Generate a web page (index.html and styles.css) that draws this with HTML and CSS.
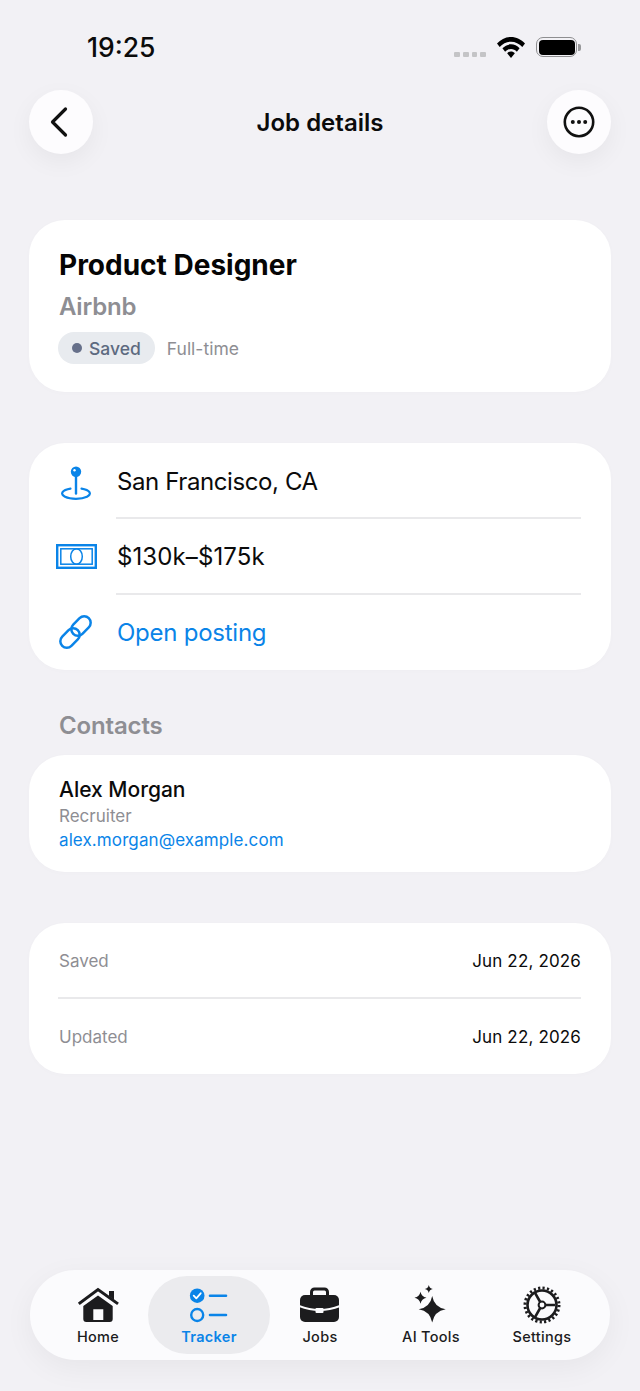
FILE: index.html
```html
<!DOCTYPE html>
<html lang="en">
<head>
<meta charset="utf-8">
<title>Job details</title>
<link rel="stylesheet" href="styles.css">
</head>
<body>
<div class="page">
  <div class="status">
    <span class="time">19:25</span>
    <div class="status-right">
      <div class="signal"><i></i><i></i><i></i><i></i></div>
      <svg class="wifi" width="28" height="21" viewBox="1.600 3 24.800 16" preserveAspectRatio="none"><path d="M14 3C9.200 3 5 4.900 1.600 8l2.400 2.600C6.700 8.100 10.200 6.600 14 6.600s7.300 1.500 10 4L26.400 8C23 4.900 18.800 3 14 3z" fill="#000"/><path d="M14 8.600c-2.900 0-5.500 1.100-7.600 3l2.400 2.600c1.400-1.300 3.200-2.100 5.200-2.100s3.800.8 5.200 2.100l2.400-2.600c-2.100-1.900-4.700-3-7.600-3z" fill="#000"/><path d="M14 14c-1.300 0-2.500.5-3.400 1.300L14 19l3.400-3.700C16.500 14.500 15.300 14 14 14z" fill="#000"/></svg>
      <div class="battery"><div class="battery-fill"></div></div>
      <div class="battery-cap"></div>
    </div>
  </div>

  <header class="nav">
    <button class="round">
      <svg width="22" height="32" viewBox="0 0 22 32"><path d="M15.500 3 2.500 16l13 13" fill="none" stroke="#111" stroke-width="3.200" stroke-linecap="round" stroke-linejoin="round"/></svg>
    </button>
    <h1 class="nav-title">Job details</h1>
    <button class="round">
      <svg width="32" height="32" viewBox="0 0 32 32"><circle cx="16" cy="16" r="14.200" fill="none" stroke="#111" stroke-width="2.600"/><circle cx="9.800" cy="16" r="2" fill="#111"/><circle cx="16" cy="16" r="2" fill="#111"/><circle cx="22.200" cy="16" r="2" fill="#111"/></svg>
    </button>
  </header>

  <main class="content">
    <section class="card summary">
      <h2 class="job-title">Product Designer</h2>
      <p class="company">Airbnb</p>
      <div class="tags">
        <span class="pill"><i class="dot"></i>Saved</span>
        <span class="job-type">Full-time</span>
      </div>
    </section>

    <section class="card info">
      <div class="info-row">
        <div class="info-icon">
          <svg width="32" height="38" viewBox="0 0 32 38"><path d="M10.500 26.630A13.900 5.300 0 1 0 21.500 26.630" fill="none" stroke="#0a84e8" stroke-width="2.200" stroke-linecap="round"/><path d="M16 12v19.500" stroke="#0a84e8" stroke-width="2.400" stroke-linecap="round"/><circle cx="16" cy="9.700" r="5.200" fill="#0a84e8"/><circle cx="14.500" cy="8.300" r="1.200" fill="#fff"/></svg>
        </div>
        <span class="info-text text-place">San Francisco, CA</span>
      </div>
      <div class="info-row">
        <div class="info-icon">
          <svg width="41" height="25" viewBox="0 0 41 25"><rect x="1.200" y="1.200" width="38.600" height="22.600" fill="none" stroke="#0a84e8" stroke-width="2.400"/><rect x="4.800" y="4.800" width="31.400" height="15.400" fill="none" stroke="#0a84e8" stroke-width="1.500"/><ellipse cx="20.500" cy="12.500" rx="5.800" ry="7.700" fill="none" stroke="#0a84e8" stroke-width="1.500"/></svg>
        </div>
        <span class="info-text text-pay">$130k–$175k</span>
      </div>
      <div class="info-row">
        <div class="info-icon">
          <svg width="36" height="38" viewBox="0 0 36 38"><g fill="none" stroke="#0a84e8" stroke-width="2.500"><rect x="-11" y="-6.500" width="22" height="13" rx="6.500" transform="translate(23 13) rotate(-45)"/><rect x="-11" y="-6.500" width="22" height="13" rx="6.500" transform="translate(12 25) rotate(-45)"/></g></svg>
        </div>
        <span class="info-text link">Open posting</span>
      </div>
    </section>

    <h3 class="section-label">Contacts</h3>
    <section class="card contact">
      <p class="contact-name">Alex Morgan</p>
      <p class="contact-role">Recruiter</p>
      <p class="contact-email">alex.morgan@example.com</p>
    </section>

    <section class="card dates">
      <div class="date-row"><span class="date-label">Saved</span><span class="date-value">Jun 22, 2026</span></div>
      <div class="date-row"><span class="date-label">Updated</span><span class="date-value">Jun 22, 2026</span></div>
    </section>
  </main>

  <nav class="tabbar">
    <div class="tab">
      <svg width="42" height="38" viewBox="0 0 42 38"><path d="M3 17 21 3.500 39.800 17" fill="none" stroke="#1c1c1e" stroke-width="3" stroke-linecap="square"/><path d="M32 5h5v9l-5-4z" fill="#1c1c1e"/><path fill-rule="evenodd" d="M6.300 20 21 9.500 35.700 20V33a3 3 0 0 1-3 3H9.300a3 3 0 0 1-3-3zM16.300 23.300V34h10V23.300z" fill="#1c1c1e"/></svg>
      <span>Home</span>
    </div>
    <div class="tab active">
      <svg width="42" height="38" viewBox="0 0 42 38"><circle cx="9.200" cy="9.700" r="7.300" fill="#0a84e8"/><path d="M5.700 9.700l2.600 2.600 4.400-5" fill="none" stroke="#fff" stroke-width="1.800" stroke-linecap="round" stroke-linejoin="round"/><circle cx="9.200" cy="29" r="6" fill="none" stroke="#0a84e8" stroke-width="2.400"/><path d="M22 9.700h16M22 29h16" stroke="#0a84e8" stroke-width="2.600" stroke-linecap="round"/></svg>
      <span>Tracker</span>
    </div>
    <div class="tab">
      <svg width="42" height="38" viewBox="0 0 42 38"><path d="M12.500 10V6a3 3 0 0 1 3-3h10a3 3 0 0 1 3 3v4" fill="none" stroke="#1c1c1e" stroke-width="3"/><rect x="1" y="9" width="39" height="27" rx="5" fill="#1c1c1e"/><path d="M0 20Q20.500 28 41 20" fill="none" stroke="#fbfbfd" stroke-width="2"/><rect x="16.500" y="22" width="8" height="5" rx="1" fill="#fbfbfd"/></svg>
      <span>Jobs</span>
    </div>
    <div class="tab">
      <svg class="spark" width="42" height="38" viewBox="0 0 42 38"><path d="M22.200 10Q24.200 21.300 35.700 23.300 24.200 25.300 22.200 36.600 20.200 25.300 8.700 23.300 20.200 21.300 22.200 10z" fill="#1c1c1e"/><path d="M10.500 5.700Q11.500 10.700 16.500 11.700 11.500 12.700 10.500 17.700 9.500 12.700 4.500 11.700 9.500 10.700 10.500 5.700z" fill="#1c1c1e"/><path d="M18.800-1Q19.500 2.300 22.800 3 19.500 3.700 18.800 7 18.100 3.700 14.800 3 18.100 2.300 18.800-1z" fill="#1c1c1e"/></svg>
      <span>AI Tools</span>
    </div>
    <div class="tab">
      <svg width="42" height="38" viewBox="0 0 42 38"><g fill="none" stroke="#1c1c1e"><circle cx="21" cy="19" r="14.500" stroke-width="2.600"/><circle cx="21" cy="19" r="17" stroke-width="3" stroke-dasharray="2.200 2.250"/><circle cx="21" cy="19" r="3.400" stroke-width="2"/><path d="M24.500 19H34M19.200 16 13.750 6.440M19.200 22 13.750 31.560" stroke-width="2.600"/></g></svg>
      <span>Settings</span>
    </div>
  </nav>
</div>
</body>
</html>
```

FILE: styles.css
```css
* { box-sizing: border-box; }
html, body { margin: 0; padding: 0; }
body { font-family: Inter, "Liberation Sans", sans-serif; color: #000; background: #f2f1f5; }
p, h1, h2, h3 { margin: 0; }

.page { width: 640px; height: 1391px; display: flex; flex-direction: column; overflow: hidden; }

.status { height: 90px; padding: 31px 59px 0 87px; display: flex; justify-content: space-between; flex: none; }
.time { font-size: 26.500px; line-height: 32px; font-weight: 500; color: #0b0b0b; }
.status-right { display: flex; align-items: center; height: 32px; }
.signal { display: flex; gap: 3px; margin: 15px 11px 0 0; }
.signal i { width: 5.750px; height: 5px; border-radius: 1px; background: #c4c4c6; }
.wifi { margin-right: 11px; }
.battery { width: 41px; height: 20px; border: 1.500px solid #8e8e90; border-radius: 7px; padding: 1.500px; }
.battery-fill { width: 100%; height: 100%; background: #000; border-radius: 4px; }
.battery-cap { width: 3px; height: 7px; margin-left: 1px; background: #98989a; border-radius: 0 2px 2px 0; }

.nav { height: 64px; margin: 0 29px; display: flex; align-items: center; justify-content: space-between; flex: none; }
.round { width: 64px; height: 64px; border: 0; padding: 0; border-radius: 50%; background: #fdfcfe; display: flex; align-items: center; justify-content: center; box-shadow: 0 8px 24px rgba(0,0,0,0.05); }
.nav-title { font-size: 24px; line-height: 32px; font-weight: 600; color: #0b0b0b; padding-top: 2px; }

.content { padding: 66px 29px 0; display: flex; flex-direction: column; flex: none; }
.card { background: #fff; border-radius: 36px; box-shadow: 0 1px 6px rgba(0,0,0,0.015); }

.summary { height: 172px; padding: 27px 30px 0; margin-bottom: 51px; }
.job-title { font-size: 28px; line-height: 36px; font-weight: 700; color: #050505; }
.company { margin-top: 8px; font-size: 24px; line-height: 32px; font-weight: 600; color: #8e8e93; letter-spacing: -0.2px; }
.tags { display: flex; align-items: center; gap: 12px; margin: 9px 0 0 -1px; }
.pill { height: 32px; padding: 0 14px; border-radius: 16px; background: #e8ebef; color: #5d6a80; font-size: 17.500px; font-weight: 500; display: flex; align-items: center; gap: 7px; }
.dot { width: 10px; height: 10px; border-radius: 50%; background: #66708a; }
.job-type { font-size: 17.500px; color: #8e8e93; }

.info { height: 227px; margin-bottom: 40px; display: flex; flex-direction: column; }
.info-row { height: 76px; flex: none; display: flex; align-items: center; position: relative; padding: 2px 0 0 88px; }
.info-row:first-child { height: 75px; }
.info-row + .info-row::before { content: ""; position: absolute; top: -1px; left: 87px; right: 30px; height: 2px; background: #e9e9eb; }
.info-icon { position: absolute; left: 26px; top: 0; bottom: 0; width: 42px; display: flex; justify-content: center; align-items: center; }
.info-text { font-size: 24px; line-height: 32px; color: #0b0b0b; letter-spacing: -0.25px; }
.text-place { letter-spacing: -0.4px; }
.text-pay { letter-spacing: 0.1px; }
.link { color: #0a84e8; }

.section-label { margin-left: 30px; font-size: 24px; line-height: 32px; font-weight: 600; color: #8e8e93; letter-spacing: -0.15px; margin-bottom: 13px; }

.contact { height: 117px; padding: 21px 30px 0; margin-bottom: 51px; }
.contact-name { font-size: 21px; line-height: 28px; font-weight: 500; color: #0b0b0b; }
.contact-role { font-size: 17px; line-height: 24px; color: #8e8e93; }
.contact-email { font-size: 17px; line-height: 24px; color: #0a84e8; letter-spacing: 0.1px; }

.dates { height: 151px; padding: 0 30px 0 29px; display: flex; flex-direction: column; }
.date-row { flex: 1; display: flex; align-items: center; justify-content: space-between; font-size: 17px; padding: 1px 0 0 1px; }
.date-row:first-child { flex: none; height: 74px; }
.date-row + .date-row { border-top: 2px solid #e9e9eb; }
.date-label { color: #8e8e93; }
.date-value { color: #0b0b0b; letter-spacing: 0.15px; }

.tabbar { margin: auto 30px 31px; height: 90px; flex: none; background: #fbfbfd; border-radius: 45px; display: flex; padding: 6px 12.500px; box-shadow: 0 8px 30px rgba(0,0,0,0.05); }
.tab { width: 111px; flex: none; border-radius: 39px; display: flex; flex-direction: column; align-items: center; padding-top: 10px; font-size: 14.500px; line-height: 20px; font-weight: 500; color: #1c1c1e; letter-spacing: 0.3px; }
.tab svg { margin-bottom: 3px; }
.spark { overflow: visible; }
.tab.active { width: 122px; margin: 0 -5.500px; background: #ebebee; color: #0a84e8; font-weight: 600; }
```
